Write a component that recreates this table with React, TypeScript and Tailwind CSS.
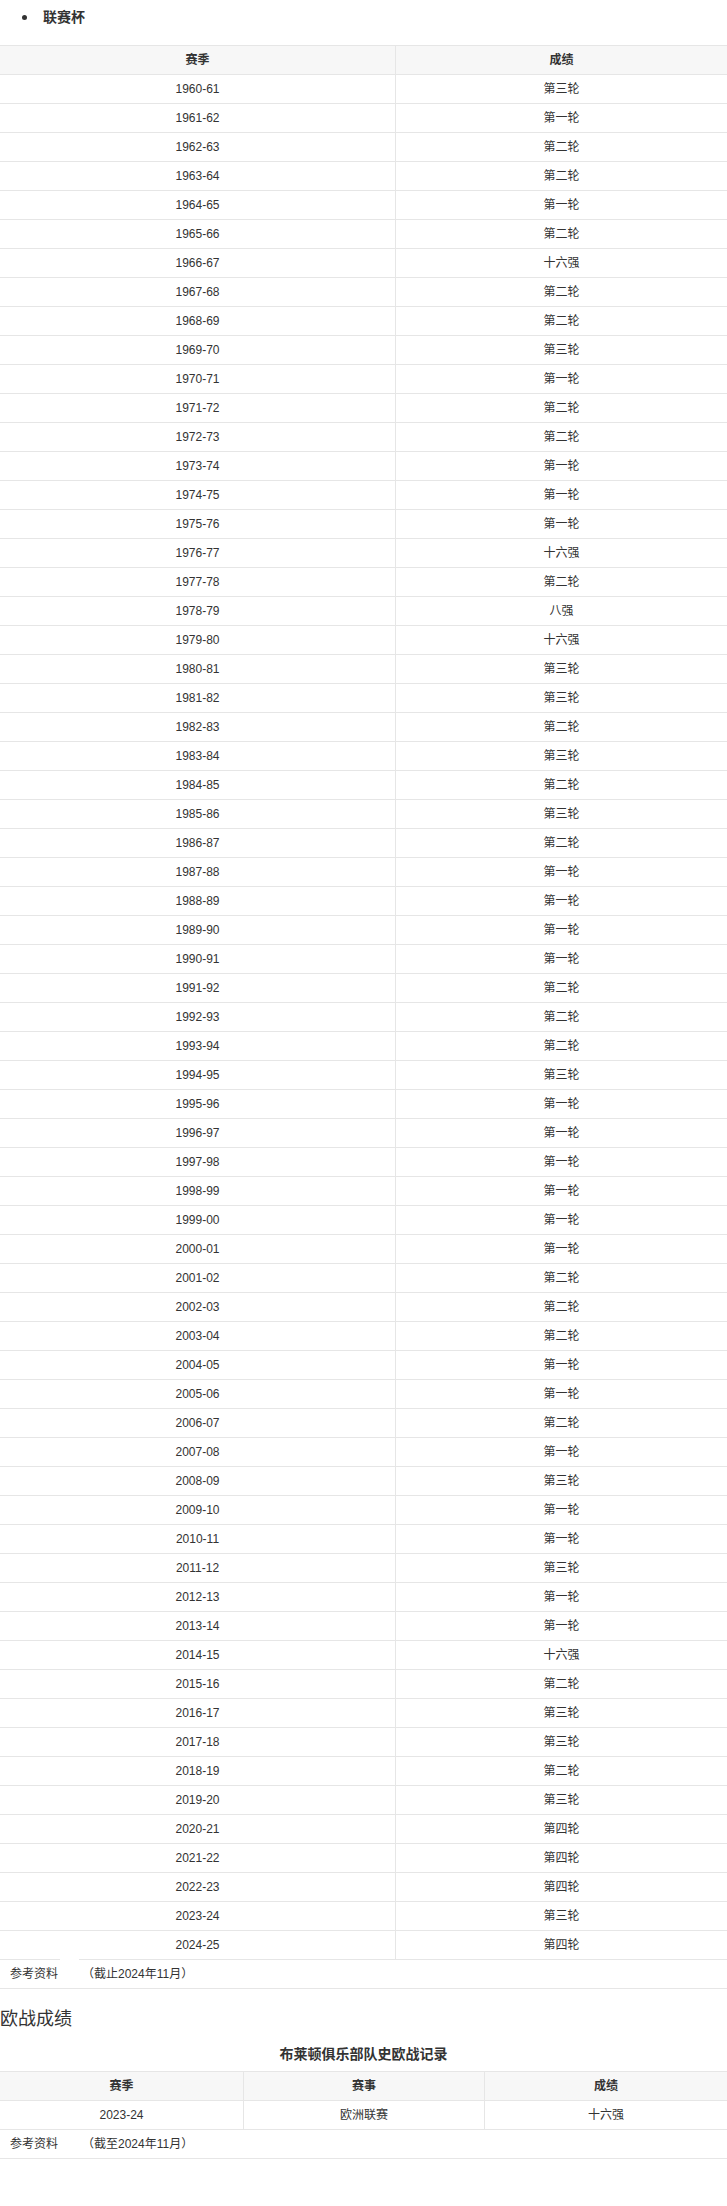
import React from "react";

const rows: [string, string][] = [
  ["1960-61", "第三轮"],
  ["1961-62", "第一轮"],
  ["1962-63", "第二轮"],
  ["1963-64", "第二轮"],
  ["1964-65", "第一轮"],
  ["1965-66", "第二轮"],
  ["1966-67", "十六强"],
  ["1967-68", "第二轮"],
  ["1968-69", "第二轮"],
  ["1969-70", "第三轮"],
  ["1970-71", "第一轮"],
  ["1971-72", "第二轮"],
  ["1972-73", "第二轮"],
  ["1973-74", "第一轮"],
  ["1974-75", "第一轮"],
  ["1975-76", "第一轮"],
  ["1976-77", "十六强"],
  ["1977-78", "第二轮"],
  ["1978-79", "八强"],
  ["1979-80", "十六强"],
  ["1980-81", "第三轮"],
  ["1981-82", "第三轮"],
  ["1982-83", "第二轮"],
  ["1983-84", "第三轮"],
  ["1984-85", "第二轮"],
  ["1985-86", "第三轮"],
  ["1986-87", "第二轮"],
  ["1987-88", "第一轮"],
  ["1988-89", "第一轮"],
  ["1989-90", "第一轮"],
  ["1990-91", "第一轮"],
  ["1991-92", "第二轮"],
  ["1992-93", "第二轮"],
  ["1993-94", "第二轮"],
  ["1994-95", "第三轮"],
  ["1995-96", "第一轮"],
  ["1996-97", "第一轮"],
  ["1997-98", "第一轮"],
  ["1998-99", "第一轮"],
  ["1999-00", "第一轮"],
  ["2000-01", "第一轮"],
  ["2001-02", "第二轮"],
  ["2002-03", "第二轮"],
  ["2003-04", "第二轮"],
  ["2004-05", "第一轮"],
  ["2005-06", "第一轮"],
  ["2006-07", "第二轮"],
  ["2007-08", "第一轮"],
  ["2008-09", "第三轮"],
  ["2009-10", "第一轮"],
  ["2010-11", "第一轮"],
  ["2011-12", "第三轮"],
  ["2012-13", "第一轮"],
  ["2013-14", "第一轮"],
  ["2014-15", "十六强"],
  ["2015-16", "第二轮"],
  ["2016-17", "第三轮"],
  ["2017-18", "第三轮"],
  ["2018-19", "第二轮"],
  ["2019-20", "第三轮"],
  ["2020-21", "第四轮"],
  ["2021-22", "第四轮"],
  ["2022-23", "第四轮"],
  ["2023-24", "第三轮"],
  ["2024-25", "第四轮"],
];

const font = "font-['Liberation_Sans','Noto_Sans_CJK_SC',sans-serif]";

export default function App() {
  return (
    <div className={`w-[727px] min-h-[2206px] bg-white text-[#333] ${font}`}>
      {/* bullet heading */}
      <div className="h-[45px] pt-[9px] flex items-start">
        <div className="flex items-center h-[17px]">
          <span className="ml-[22px] w-[5px] h-[5px] rounded-full bg-[#333]" />
          <span className="ml-[16px] text-[14px] leading-[17px] font-bold">联赛杯</span>
        </div>
      </div>

      {/* league cup table */}
      <div className="border-t border-[#e6e6e6]">
        <div className="grid grid-cols-[396px_1fr] h-[29px] bg-[#f7f7f7] border-b border-[#e6e6e6] text-[12px] font-bold">
          <div className="flex items-center justify-center border-r border-[#e6e6e6]">赛季</div>
          <div className="flex items-center justify-center">成绩</div>
        </div>
        {rows.map(([s, r], i) => (
          <div
            key={s}
            className={`grid grid-cols-[396px_1fr] text-[12px] ${
              i === rows.length - 1 ? "h-[28px]" : "h-[29px] border-b border-[#e6e6e6]"
            }`}
          >
            <div className="flex items-center justify-center border-r border-[#e6e6e6]">{s}</div>
            <div className="flex items-center justify-center">{r}</div>
          </div>
        ))}
        <div className="flex h-px">
          <div className="w-[60px] bg-[#e6e6e6]" />
          <div className="w-[19px]" />
          <div className="flex-1 bg-[#e6e6e6]" />
        </div>
        <div className="flex items-center h-[29px] border-b border-[#e6e6e6] text-[12px]">
          <span className="ml-[10px] w-[72px]">参考资料</span>
          <span>（截止2024年11月）</span>
        </div>
      </div>

      {/* European record */}
      <h2 className="mt-[18px] text-[18px] leading-[24px] font-normal">欧战成绩</h2>
      <div className="mt-[13px] text-center text-[14px] leading-[20px] font-bold">布莱顿俱乐部队史欧战记录</div>
      <div className="mt-[7px] border-t border-[#e6e6e6]">
        <div className="grid grid-cols-[244px_241px_1fr] h-[29px] bg-[#f7f7f7] border-b border-[#e6e6e6] text-[12px] font-bold">
          <div className="flex items-center justify-center border-r border-[#e6e6e6]">赛季</div>
          <div className="flex items-center justify-center border-r border-[#e6e6e6]">赛事</div>
          <div className="flex items-center justify-center">成绩</div>
        </div>
        <div className="grid grid-cols-[244px_241px_1fr] h-[29px] border-b border-[#e6e6e6] text-[12px]">
          <div className="flex items-center justify-center border-r border-[#e6e6e6]">2023-24</div>
          <div className="flex items-center justify-center border-r border-[#e6e6e6]">欧洲联赛</div>
          <div className="flex items-center justify-center">十六强</div>
        </div>
        <div className="flex items-center h-[29px] border-b border-[#e6e6e6] text-[12px]">
          <span className="ml-[10px] w-[72px]">参考资料</span>
          <span>（截至2024年11月）</span>
        </div>
      </div>
    </div>
  );
}
